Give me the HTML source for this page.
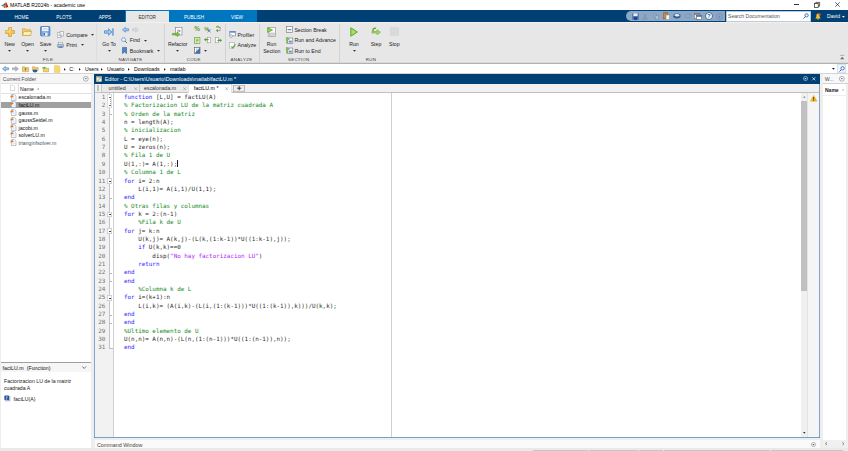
<!DOCTYPE html>
<html lang="es"><head><meta charset="utf-8"><title>MATLAB R2024b - academic use</title>
<style>
html,body{margin:0;padding:0;}
body{width:848px;height:451px;overflow:hidden;background:#f0f0f0;position:relative;font-family:"Liberation Sans",sans-serif;}
.a{position:absolute;}
.t{font-size:5.2px;line-height:8px;white-space:pre;color:#222;}
.ln{font-family:"DejaVu Sans Mono","Liberation Mono",monospace;font-size:5.9px;line-height:8px;text-align:right;color:#707070;white-space:pre;}
.cd{font-family:"DejaVu Sans Mono","Liberation Mono",monospace;font-size:5.9px;line-height:8px;white-space:pre;color:#2c2c2c;}
svg{overflow:visible;}
</style></head>
<body>
<div class="a " style="left:0px;top:0px;width:848px;height:10px;background:#fff;"></div>
<svg class="a" style="left:0.6px;top:1.6px" width="7.4" height="6.4" viewBox="0 0 7.4 6.4"><path d="M0 3.6L2.2 2.4L3.4 3.6L2.4 4.8Z" fill="#4a8fd0"/><path d="M2.4 4.8L3.4 3.6L5 0.2C5.6 1 6.4 3.4 7.4 5.2C6.6 4.8 6 5 5.4 6L4.4 5.2L3.4 6.2Z" fill="#d9541e"/><path d="M2.2 2.4L3.4 3.6L5 0.2C4.2 0.6 3.4 1.8 2.2 2.4Z" fill="#2a3f6a"/><path d="M5 0.2C5.6 1 6.4 3.4 7.4 5.2C6.8 4.8 6.2 4.9 5.8 5.5C5.6 3.6 5.4 1.8 5 0.2Z" fill="#8c1c0e"/><path d="M4.2 2.4L4.8 5L4.2 5.4L3.6 4Z" fill="#f5a020"/></svg>
<div class="a t" style="top:0.9px;left:9.9px;color:#000;font-size:5.1px;">MATLAB R2024b - academic use</div>
<div class="a " style="left:794.2px;top:4.2px;width:5px;height:0.5px;background:#333;"></div>
<svg class="a" style="left:813.5px;top:2px" width="6" height="6" viewBox="0 0 6 6"><rect x="0.4" y="1.6" width="3.8" height="3.8" fill="none" stroke="#222" stroke-width="0.7"/><path d="M1.8 1.6V0.4H5.6V4.2H4.2" fill="none" stroke="#222" stroke-width="0.7"/></svg>
<svg class="a" style="left:834.5px;top:2px" width="5" height="5" viewBox="0 0 5 5"><path d="M0.3 0.3L4.7 4.7M4.7 0.3L0.3 4.7" stroke="#222" stroke-width="0.7"/></svg>
<div class="a " style="left:0px;top:10px;width:848px;height:12px;background:#004074;"></div>
<div class="a " style="left:125px;top:10px;width:132.3px;height:12px;background:#0076c0;"></div>
<div class="a " style="left:125.6px;top:11px;width:43px;height:11.5px;background:#e7e7e7;"></div>
<div class="a t" style="top:13.6px;left:21.5px;transform:translateX(-50%);color:#fff;font-size:4.7px;">HOME</div>
<div class="a t" style="top:13.6px;left:64px;transform:translateX(-50%);color:#fff;font-size:4.7px;">PLOTS</div>
<div class="a t" style="top:13.6px;left:105px;transform:translateX(-50%);color:#fff;font-size:4.7px;">APPS</div>
<div class="a t" style="top:13.6px;left:194px;transform:translateX(-50%);color:#fff;font-size:4.7px;">PUBLISH</div>
<div class="a t" style="top:13.6px;left:237px;transform:translateX(-50%);color:#fff;font-size:4.7px;">VIEW</div>
<div class="a t" style="top:13.6px;left:147.2px;transform:translateX(-50%);color:#333;font-size:4.7px;">EDITOR</div>
<div class="a " style="left:626.3px;top:11.2px;width:99px;height:9.8px;background:#8da7c7;border-radius:5px 0 0 5px;"></div>
<svg class="a" style="left:631.5px;top:12.5px" width="7" height="7" viewBox="0 0 7 7"><rect x="0.3" y="0.3" width="6.4" height="6.4" rx="0.5" fill="#3d6fb0"/><rect x="1.4" y="0.3" width="4.2" height="2.8" fill="#e8eef6"/><rect x="2" y="4.3" width="3" height="2.4" fill="#1e3e6e"/></svg>
<svg class="a" style="left:642.4px;top:12.5px" width="6" height="7" viewBox="0 0 6 7"><path d="M1.2 0.5L4 5M4.8 0.5L2 5" stroke="#7389a6" stroke-width="0.6" fill="none"/><circle cx="1.6" cy="5.7" r="0.9" fill="none" stroke="#7389a6" stroke-width="0.5"/><circle cx="4.4" cy="5.7" r="0.9" fill="none" stroke="#7389a6" stroke-width="0.5"/></svg>
<svg class="a" style="left:653.0px;top:12.5px" width="6" height="7" viewBox="0 0 6 7"><rect x="0.5" y="0.8" width="3" height="3.8" fill="#9fb4cf" stroke="#6f87a8" stroke-width="0.5"/><rect x="2.5" y="2.6" width="3" height="3.8" fill="#a9bcd4" stroke="#6f87a8" stroke-width="0.5"/></svg>
<svg class="a" style="left:663.0px;top:12.0px" width="7" height="8" viewBox="0 0 7 8"><rect x="0.4" y="0.8" width="4.4" height="6" fill="#c98a3a" stroke="#8a5a1c" stroke-width="0.5"/><rect x="1.6" y="0.2" width="2" height="1.3" fill="#777"/><rect x="3" y="3" width="3.5" height="4.5" fill="#f4f4f4" stroke="#7a8ba3" stroke-width="0.5"/></svg>
<svg class="a" style="left:673.25px;top:13.0px" width="8" height="6" viewBox="0 0 8 6"><ellipse cx="4" cy="3" rx="3.6" ry="2.4" fill="#2e5d94"/><ellipse cx="4" cy="2.2" rx="2.6" ry="1.2" fill="#dfe9f5"/><path d="M0.4 3L2.2 3L1.3 4.6Z" fill="#173a66"/></svg>
<svg class="a" style="left:683.5px;top:13.0px" width="8" height="6" viewBox="0 0 8 6"><ellipse cx="4" cy="3" rx="3.2" ry="2.1" fill="none" stroke="#7d93b1" stroke-width="0.7"/><path d="M5 0.4L7.2 1.2L5.6 2.6Z" fill="#7d93b1"/></svg>
<svg class="a" style="left:694.0px;top:12.5px" width="8" height="7" viewBox="0 0 8 7"><rect x="0.4" y="0.6" width="5.4" height="4.6" fill="#f2f2f2" stroke="#666" stroke-width="0.5"/><rect x="0.4" y="0.6" width="5.4" height="1.1" fill="#666"/><rect x="2.4" y="2.6" width="5.2" height="4" fill="#fff" stroke="#444" stroke-width="0.5"/><rect x="2.4" y="2.6" width="5.2" height="1.1" fill="#2b5a94"/></svg>
<svg class="a" style="left:704.75px;top:12.0px" width="8" height="8" viewBox="0 0 8 8"><circle cx="4" cy="4" r="3.5" fill="#fff" stroke="#24507f" stroke-width="0.8"/><text x="4" y="6" font-family="Liberation Sans,sans-serif" font-size="5.4" font-weight="bold" text-anchor="middle" fill="#24507f">?</text></svg>
<svg class="a" style="left:715.9px;top:12.5px" width="7" height="7" viewBox="0 0 7 7"><circle cx="3.5" cy="3.5" r="3" fill="none" stroke="#6f86a5" stroke-width="0.6"/><path d="M2.2 4L3.5 2.4L4.8 4Z" fill="#6f86a5"/><rect x="3.2" y="3.6" width="0.6" height="1.6" fill="#6f86a5"/></svg>
<div class="a " style="left:726px;top:10.6px;width:84.6px;height:11.2px;background:#fff;box-shadow:inset 0 0 0 0.5px #7a9ac0;"></div>
<div class="a t" style="top:12.4px;left:728px;color:#555;font-size:5.1px;">Search Documentation</div>
<svg class="a" style="left:803.0px;top:13.0px" width="6" height="6" viewBox="0 0 6 6"><circle cx="3.6" cy="2.3" r="1.7" fill="#dfeaf8" stroke="#2f69b3" stroke-width="0.8"/><path d="M2.4 3.6L0.5 5.5" stroke="#2f69b3" stroke-width="1"/></svg>
<svg class="a" style="left:814.6px;top:12.5px" width="6" height="7" viewBox="0 0 6 7"><path d="M3 0.6C1.6 0.6 1.4 2 1.4 3.2C1.4 4.4 0.6 4.8 0.4 5.4H5.6C5.4 4.8 4.6 4.4 4.6 3.2C4.6 2 4.4 0.6 3 0.6Z" fill="#f2c230"/><circle cx="3" cy="6" r="0.7" fill="#f2c230"/><circle cx="4.7" cy="1.5" r="1.2" fill="#e0452b"/></svg>
<div class="a t" style="top:12.4px;left:827px;color:#fff;font-size:5.1px;">David</div>
<svg class="a" style="left:841.6px;top:15.75px" width="2.8" height="1.7" viewBox="0 0 2.8 1.7"><path d="M0 0H2.8L1.4 1.7Z" fill="#fff"/></svg>
<div class="a " style="left:0px;top:22.2px;width:848px;height:41px;background:#e7e7e7;"></div>
<div class="a " style="left:0px;top:22px;width:848px;height:1.4px;background:#f6f0ea;"></div>
<div class="a " style="left:0px;top:62.3px;width:848px;height:0.5px;background:#d8d8d8;"></div>
<div class="a " style="left:0px;top:62.7px;width:848px;height:0.9px;background:#b2b2b2;"></div>
<div class="a " style="left:95.60000000000001px;top:24px;width:0.7px;height:37.5px;background:#dedede;"></div>
<div class="a " style="left:164.1px;top:24px;width:0.7px;height:37.5px;background:#d2d2d2;"></div>
<div class="a " style="left:225.29999999999998px;top:24px;width:0.7px;height:37.5px;background:#d2d2d2;"></div>
<div class="a " style="left:259.09999999999997px;top:24px;width:0.7px;height:37.5px;background:#d2d2d2;"></div>
<div class="a " style="left:339.3px;top:24px;width:0.7px;height:37.5px;background:#d2d2d2;"></div>
<div class="a t" style="top:55.7px;left:48px;transform:translateX(-50%);color:#404040;font-size:4.4px;letter-spacing:0.3px;">FILE</div>
<div class="a t" style="top:55.7px;left:130.5px;transform:translateX(-50%);color:#404040;font-size:4.4px;letter-spacing:0.3px;">NAVIGATE</div>
<div class="a t" style="top:55.7px;left:193.75px;transform:translateX(-50%);color:#404040;font-size:4.4px;letter-spacing:0.3px;">CODE</div>
<div class="a t" style="top:55.7px;left:241.5px;transform:translateX(-50%);color:#404040;font-size:4.4px;letter-spacing:0.3px;">ANALYZE</div>
<div class="a t" style="top:55.7px;left:298.75px;transform:translateX(-50%);color:#404040;font-size:4.4px;letter-spacing:0.3px;">SECTION</div>
<div class="a t" style="top:55.7px;left:371px;transform:translateX(-50%);color:#404040;font-size:4.4px;letter-spacing:0.3px;">RUN</div>
<svg class="a" style="left:4.6px;top:26.9px" width="10" height="10" viewBox="0 0 10 10"><path d="M3.6 0.6H6.4V3.6H9.4V6.4H6.4V9.4H3.6V6.4H0.6V3.6H3.6Z" fill="#f7cf52" stroke="#c8922a" stroke-width="0.7"/><path d="M4.2 1.2H5.2V4.2H1.2V5.2" fill="none" stroke="#fdebb0" stroke-width="0.6"/></svg>
<div class="a t" style="top:39.8px;left:9.6px;transform:translateX(-50%);color:#1c1c1c;">New</div>
<svg class="a" style="left:8.1px;top:49.5px" width="3" height="1.8" viewBox="0 0 3 1.8"><path d="M0 0H3L1.5 1.8Z" fill="#333"/></svg>
<svg class="a" style="left:22.4px;top:27.8px" width="10" height="8" viewBox="0 0 10 8"><path d="M0.5 0.8H3.4L4.2 1.8H8.6V7.5H0.5Z" fill="#f3cf73" stroke="#c49a35" stroke-width="0.6"/><path d="M0.5 7.5L1.8 3.4H9.6L8.6 7.5Z" fill="#fcecb6" stroke="#c49a35" stroke-width="0.6"/></svg>
<div class="a t" style="top:39.8px;left:27.5px;transform:translateX(-50%);color:#1c1c1c;">Open</div>
<svg class="a" style="left:26.0px;top:49.5px" width="3" height="1.8" viewBox="0 0 3 1.8"><path d="M0 0H3L1.5 1.8Z" fill="#333"/></svg>
<svg class="a" style="left:40.4px;top:26.2px" width="10.4" height="10.4" viewBox="0 0 10.4 10.4"><rect x="0.5" y="0.5" width="9.4" height="9.4" rx="0.8" fill="#6f9fd8" stroke="#3f6fae" stroke-width="0.7"/><rect x="2" y="1" width="6.4" height="4.2" fill="#f4f8fd"/><rect x="2.8" y="2.2" width="4.8" height="0.5" fill="#a9c2e0"/><rect x="2.8" y="3.4" width="4.8" height="0.5" fill="#a9c2e0"/><rect x="2.8" y="6.6" width="4.8" height="3.3" fill="#e9f0f9"/><rect x="3.4" y="7" width="1.6" height="2.6" fill="#3f6fae"/></svg>
<div class="a t" style="top:39.8px;left:45.6px;transform:translateX(-50%);color:#1c1c1c;">Save</div>
<svg class="a" style="left:44.1px;top:49.5px" width="3" height="1.8" viewBox="0 0 3 1.8"><path d="M0 0H3L1.5 1.8Z" fill="#333"/></svg>
<svg class="a" style="left:57.1px;top:31.3px" width="7" height="7" viewBox="0 0 7 7"><rect x="0.4" y="1.8" width="3.6" height="4.6" fill="#fff" stroke="#8a8a8a" stroke-width="0.5"/><rect x="3" y="0.5" width="3.6" height="4.6" fill="#f4f4f4" stroke="#8a8a8a" stroke-width="0.5"/><path d="M1.2 4.2H5" stroke="#7b96b8" stroke-width="0.6"/></svg>
<div class="a t" style="top:30.9px;left:66.2px;color:#1c1c1c;font-size:5.25px;">Compare</div>
<svg class="a" style="left:91.3px;top:34.4px" width="3" height="1.8" viewBox="0 0 3 1.8"><path d="M0 0H3L1.5 1.8Z" fill="#333"/></svg>
<svg class="a" style="left:57.1px;top:41.6px" width="7" height="6.4" viewBox="0 0 7 6.4"><rect x="1.6" y="0.3" width="3.8" height="2.2" fill="#fff" stroke="#8a8a8a" stroke-width="0.5"/><rect x="0.4" y="2.3" width="6.2" height="2.8" rx="0.5" fill="#b9c3cf" stroke="#6f7c8c" stroke-width="0.5"/><rect x="1.4" y="4.4" width="4.2" height="1.6" fill="#5d8ac4"/></svg>
<div class="a t" style="top:40.9px;left:66.2px;color:#1c1c1c;font-size:5.25px;">Print</div>
<svg class="a" style="left:80.8px;top:44.4px" width="3" height="1.8" viewBox="0 0 3 1.8"><path d="M0 0H3L1.5 1.8Z" fill="#333"/></svg>
<svg class="a" style="left:103.5px;top:27.9px" width="10" height="8" viewBox="0 0 10 8"><path d="M0.5 2.8H4.6V0.8L8 4L4.6 7.2V5.2H0.5Z" fill="#9cc6ee" stroke="#3f7fc4" stroke-width="0.7"/><rect x="8.4" y="0.4" width="1.1" height="7.2" fill="#3f7fc4"/></svg>
<div class="a t" style="top:39.8px;left:109px;transform:translateX(-50%);color:#1c1c1c;">Go To</div>
<svg class="a" style="left:107.5px;top:49.5px" width="3" height="1.8" viewBox="0 0 3 1.8"><path d="M0 0H3L1.5 1.8Z" fill="#333"/></svg>
<svg class="a" style="left:121.5px;top:26.6px" width="7" height="5.6" viewBox="0 0 7 5.6"><path d="M6.6 1.8H3.4V0.4L0.4 2.8L3.4 5.2V3.8H6.6Z" fill="#a5ccf0" stroke="#3f7fc4" stroke-width="0.6"/></svg>
<svg class="a" style="left:132.1px;top:26.6px" width="7" height="5.6" viewBox="0 0 7 5.6"><path d="M0.4 1.8H3.6V0.4L6.6 2.8L3.6 5.2V3.8H0.4Z" fill="#dadada" stroke="#c2c2c2" stroke-width="0.5"/></svg>
<svg class="a" style="left:121.2px;top:36.8px" width="6.4" height="6.4" viewBox="0 0 6.4 6.4"><circle cx="2.6" cy="2.6" r="2" fill="#e6f0fb" stroke="#5a8fce" stroke-width="0.7"/><path d="M4.1 4.1L6 6" stroke="#8a6a3a" stroke-width="1"/></svg>
<div class="a t" style="top:36.1px;left:129.8px;color:#1c1c1c;font-size:5.25px;">Find</div>
<svg class="a" style="left:143.8px;top:39.5px" width="3" height="1.8" viewBox="0 0 3 1.8"><path d="M0 0H3L1.5 1.8Z" fill="#333"/></svg>
<svg class="a" style="left:121.9px;top:46.9px" width="5" height="7" viewBox="0 0 5 7"><path d="M0.5 0.4H4.5V6.6L2.5 4.9L0.5 6.6Z" fill="#4f86c6" stroke="#2a5d9c" stroke-width="0.6"/></svg>
<div class="a t" style="top:46.5px;left:129.8px;color:#1c1c1c;font-size:5.25px;">Bookmark</div>
<svg class="a" style="left:157.3px;top:49.9px" width="3" height="1.8" viewBox="0 0 3 1.8"><path d="M0 0H3L1.5 1.8Z" fill="#333"/></svg>
<svg class="a" style="left:172.0px;top:26.6px" width="11" height="10" viewBox="0 0 11 10"><rect x="3.6" y="0.4" width="6.4" height="7.6" fill="#fff" stroke="#7d7d7d" stroke-width="0.6"/><text x="6.8" y="5" font-family="Liberation Serif,serif" font-style="italic" font-size="4.4" text-anchor="middle" fill="#222">fx</text><path d="M0.4 6.4H5V5L8 7.2L5 9.4V8H0.4Z" fill="#7cc242" stroke="#4d8f1f" stroke-width="0.5"/></svg>
<div class="a t" style="top:39.8px;left:177.7px;transform:translateX(-50%);color:#1c1c1c;">Refactor</div>
<svg class="a" style="left:176.2px;top:49.5px" width="3" height="1.8" viewBox="0 0 3 1.8"><path d="M0 0H3L1.5 1.8Z" fill="#333"/></svg>
<svg class="a" style="left:193.7px;top:26.2px" width="6.4" height="6.4" viewBox="0 0 6.4 6.4"><text x="3.2" y="5.4" font-family="Liberation Sans,sans-serif" font-size="6.4" font-weight="bold" text-anchor="middle" fill="#5aa02c">%</text></svg>
<svg class="a" style="left:204.0px;top:26.2px" width="7" height="6.4" viewBox="0 0 7 6.4"><text x="2.8" y="5" font-family="Liberation Sans,sans-serif" font-size="5.6" font-weight="bold" text-anchor="middle" fill="#5aa02c">%</text><path d="M3.6 3.4L6.6 6.2M6.6 3.4L3.6 6.2" stroke="#3c6fb0" stroke-width="0.8"/></svg>
<svg class="a" style="left:214.5px;top:26.2px" width="7" height="6.4" viewBox="0 0 7 6.4"><path d="M1 1.2H5.2V4.6H2.4" fill="none" stroke="#8a8a8a" stroke-width="0.7"/><path d="M3 3L0.8 4.6L3 6.2Z" fill="#5aa02c"/><path d="M1.2 0.6C3 -0.2 4.4 0.4 4.6 2" fill="none" stroke="#5aa02c" stroke-width="0.9"/></svg>
<svg class="a" style="left:193.7px;top:36.5px" width="6.4" height="7" viewBox="0 0 6.4 7"><rect x="0.5" y="0.5" width="5.4" height="6" fill="#e3f3cf" stroke="#6aa83a" stroke-width="0.7"/><path d="M1.8 2.2H4.6M1.8 3.6H4.6M1.8 5H3.6" stroke="#4d8f1f" stroke-width="0.6"/></svg>
<svg class="a" style="left:204.0px;top:36.8px" width="7" height="6.4" viewBox="0 0 7 6.4"><rect x="3.6" y="0.6" width="3" height="5.2" fill="#fff" stroke="#8a8a8a" stroke-width="0.5"/><path d="M4.6 2.6H0.4" stroke="#5aa02c" stroke-width="1.2"/><path d="M2.2 0.8L0.2 2.6L2.2 4.4Z" fill="#5aa02c"/></svg>
<svg class="a" style="left:214.5px;top:36.8px" width="7" height="6.4" viewBox="0 0 7 6.4"><rect x="0.4" y="0.6" width="3" height="5.2" fill="#fff" stroke="#8a8a8a" stroke-width="0.5"/><path d="M2.4 3.4H6.4" stroke="#5aa02c" stroke-width="1.2"/><path d="M4.8 1.6L6.8 3.4L4.8 5.2Z" fill="#5aa02c"/></svg>
<svg class="a" style="left:193.7px;top:46.9px" width="6.4" height="7" viewBox="0 0 6.4 7"><rect x="0.4" y="0.4" width="5.6" height="6.2" fill="#fff" stroke="#555" stroke-width="0.6"/><path d="M0.4 6.6L6 0.4V6.6Z" fill="#3f75b5"/><text x="2.4" y="4" font-family="Liberation Serif,serif" font-style="italic" font-size="3.6" text-anchor="middle" fill="#222">f</text></svg>
<svg class="a" style="left:203.8px;top:49.7px" width="3" height="1.8" viewBox="0 0 3 1.8"><path d="M0 0H3L1.5 1.8Z" fill="#333"/></svg>
<svg class="a" style="left:229.25px;top:30.9px" width="7" height="7" viewBox="0 0 7 7"><rect x="0.8" y="0.5" width="5.6" height="4.4" fill="#fff" stroke="#4a78b4" stroke-width="0.6"/><rect x="0.8" y="0.5" width="5.6" height="1.1" fill="#4a78b4"/><circle cx="2" cy="5" r="1.4" fill="#f2f2f2" stroke="#777" stroke-width="0.5"/></svg>
<div class="a t" style="top:30.5px;left:237.5px;color:#1c1c1c;font-size:5.25px;">Profiler</div>
<svg class="a" style="left:229.25px;top:41.5px" width="7" height="7" viewBox="0 0 7 7"><rect x="0.6" y="0.5" width="4.6" height="5.6" fill="#fff" stroke="#9a9a9a" stroke-width="0.5"/><path d="M2.4 4.4L3.6 5.8L6.4 2.4" fill="none" stroke="#5aa02c" stroke-width="1.1"/></svg>
<div class="a t" style="top:41.1px;left:237.5px;color:#1c1c1c;font-size:5.25px;">Analyze</div>
<svg class="a" style="left:266.5px;top:26.9px" width="9" height="10" viewBox="0 0 9 10"><rect x="1.2" y="0.6" width="7.2" height="8.8" fill="#fbfbfb" stroke="#8a8a8a" stroke-width="0.6"/><rect x="2.4" y="6" width="4.8" height="2.2" fill="#d7d7d7" stroke="#9a9a9a" stroke-width="0.4"/><path d="M0.6 0.6L5.6 3L0.6 5.4Z" fill="#8fd14f" stroke="#4d9a1f" stroke-width="0.6"/></svg>
<div class="a t" style="top:39.6px;left:271.6px;transform:translateX(-50%);color:#1c1c1c;">Run</div>
<div class="a t" style="top:46.7px;left:271.8px;transform:translateX(-50%);color:#1c1c1c;">Section</div>
<svg class="a" style="left:285.9px;top:25.9px" width="7" height="7" viewBox="0 0 7 7"><rect x="0.6" y="0.5" width="5.8" height="6" fill="#fff" stroke="#6f6f6f" stroke-width="0.6"/><path d="M1.6 3.6H5.4" stroke="#3f75b5" stroke-width="0.9"/><path d="M1.6 5H5.4" stroke="#bbb" stroke-width="0.5"/></svg>
<div class="a t" style="top:25.5px;left:294.4px;color:#1c1c1c;font-size:5.2px;">Section Break</div>
<svg class="a" style="left:285.7px;top:36.5px" width="7.4" height="7" viewBox="0 0 7.4 7"><rect x="1.6" y="1" width="5.2" height="5.6" fill="#fff" stroke="#6f6f6f" stroke-width="0.6"/><rect x="2.6" y="3.6" width="3.2" height="2" fill="#5b8fd0"/><path d="M0.3 0.4L3.6 2L0.3 3.6Z" fill="#8fd14f" stroke="#4d9a1f" stroke-width="0.5"/><path d="M0.6 4.2V6.4" stroke="#4d9a1f" stroke-width="0.7"/></svg>
<div class="a t" style="top:36.1px;left:294.4px;color:#1c1c1c;font-size:5.25px;">Run and Advance</div>
<svg class="a" style="left:285.7px;top:46.9px" width="7.4" height="7" viewBox="0 0 7.4 7"><rect x="1.6" y="1" width="5.2" height="5.6" fill="#fff" stroke="#6f6f6f" stroke-width="0.6"/><rect x="2.6" y="3.6" width="3.2" height="2" fill="#5b8fd0"/><path d="M0.3 0.4L3.6 2L0.3 3.6Z" fill="#8fd14f" stroke="#4d9a1f" stroke-width="0.5"/><path d="M0.6 4.2V6.4" stroke="#4d9a1f" stroke-width="0.7"/></svg>
<div class="a t" style="top:46.5px;left:294.4px;color:#1c1c1c;font-size:5.25px;">Run to End</div>
<svg class="a" style="left:349.75px;top:26.9px" width="8" height="10" viewBox="0 0 8 10"><path d="M0.8 0.8L7.4 5L0.8 9.2Z" fill="#a6dc6c" stroke="#5aa828" stroke-width="1"/></svg>
<div class="a t" style="top:39.8px;left:354px;transform:translateX(-50%);color:#1c1c1c;">Run</div>
<svg class="a" style="left:352.5px;top:49.5px" width="3" height="1.8" viewBox="0 0 3 1.8"><path d="M0 0H3L1.5 1.8Z" fill="#333"/></svg>
<svg class="a" style="left:371.0px;top:27.4px" width="10" height="8" viewBox="0 0 10 8"><path d="M2 4.2C1.4 2 3 0.8 5 1.4" fill="none" stroke="#5aa828" stroke-width="1.4"/><path d="M1 4.4H6V2.8L9.4 5.2L6 7.6V6H1Z" fill="#a6dc6c" stroke="#5aa828" stroke-width="0.6"/></svg>
<div class="a t" style="top:39.8px;left:376px;transform:translateX(-50%);color:#1c1c1c;">Step</div>
<svg class="a" style="left:390.1px;top:27.1px" width="9" height="9" viewBox="0 0 9 9"><rect x="0.4" y="0.4" width="8.2" height="8.2" rx="0.6" fill="#d9d9d9" stroke="#cfcfcf" stroke-width="0.4"/></svg>
<div class="a t" style="top:39.8px;left:394.3px;transform:translateX(-50%);color:#1c1c1c;">Stop</div>
<svg class="a" style="left:840.3px;top:55.1px" width="4.4" height="4.6" viewBox="0 0 4.4 4.6"><path d="M0.2 0.4H4.2" stroke="#8a8a8a" stroke-width="0.6"/><path d="M0.2 4.3L2.2 1.8L4.2 4.3Z" fill="#6a6a6a"/></svg>
<div class="a " style="left:0px;top:63.6px;width:848px;height:9.6px;background:#fff;"></div>
<svg class="a" style="left:1.5px;top:66.2px" width="7" height="5.6" viewBox="0 0 7 5.6"><path d="M6.6 1.8H3.4V0.4L0.4 2.8L3.4 5.2V3.8H6.6Z" fill="#a5ccf0" stroke="#3f7fc4" stroke-width="0.6"/></svg>
<svg class="a" style="left:11.5px;top:66.2px" width="7" height="5.6" viewBox="0 0 7 5.6"><path d="M0.4 1.8H3.6V0.4L6.6 2.8L3.6 5.2V3.8H0.4Z" fill="#b5b5b5" stroke="#9a9a9a" stroke-width="0.5"/></svg>
<svg class="a" style="left:22.1px;top:66.0px" width="7" height="6" viewBox="0 0 7 6"><path d="M0.4 0.8H2.8L3.4 1.6H6.6V5.6H0.4Z" fill="#f3cf73" stroke="#b98f2f" stroke-width="0.5"/><path d="M3.5 2.4V4.8M2.4 3.4L3.5 2.2L4.6 3.4" stroke="#7a5a12" stroke-width="0.6" fill="none"/></svg>
<svg class="a" style="left:31.5px;top:65.8px" width="7" height="6.4" viewBox="0 0 7 6.4"><path d="M0.4 0.8H2.8L3.4 1.6H6.2V4.4H0.4Z" fill="#f3cf73" stroke="#b98f2f" stroke-width="0.5"/><ellipse cx="3" cy="5" rx="2.4" ry="1.4" fill="#2a5fa8"/></svg>
<svg class="a" style="left:41.75px;top:65.8px" width="7" height="6.4" viewBox="0 0 7 6.4"><path d="M1.4 1.4H3.6L4.2 2.2H6.6V5.8H1.4Z" fill="#f3cf73" stroke="#b98f2f" stroke-width="0.5"/><path d="M0.2 1.2H2.2V0.2L3.8 1.8L2.2 3.4V2.4H0.2Z" fill="#6ab83a"/></svg>
<svg class="a" style="left:53.8px;top:65.0px" width="6.4" height="8" viewBox="0 0 6.4 8"><path d="M0.4 0.4H4L6 1.6V7.6H0.4Z" fill="#f7d774" stroke="#e2bb4b" stroke-width="0.4"/></svg>
<svg class="a" style="left:63.95px;top:67.7px" width="1.7" height="2.8" viewBox="0 0 1.7 2.8"><path d="M0 0V2.8L1.7 1.4Z" fill="#222"/></svg>
<svg class="a" style="left:78.55px;top:67.7px" width="1.7" height="2.8" viewBox="0 0 1.7 2.8"><path d="M0 0V2.8L1.7 1.4Z" fill="#222"/></svg>
<svg class="a" style="left:100.55px;top:67.7px" width="1.7" height="2.8" viewBox="0 0 1.7 2.8"><path d="M0 0V2.8L1.7 1.4Z" fill="#222"/></svg>
<svg class="a" style="left:128.15px;top:67.7px" width="1.7" height="2.8" viewBox="0 0 1.7 2.8"><path d="M0 0V2.8L1.7 1.4Z" fill="#222"/></svg>
<svg class="a" style="left:163.65px;top:67.7px" width="1.7" height="2.8" viewBox="0 0 1.7 2.8"><path d="M0 0V2.8L1.7 1.4Z" fill="#222"/></svg>
<div class="a t" style="top:65.1px;left:69.3px;color:#000;">C:</div>
<div class="a t" style="top:65.1px;left:85px;color:#000;">Users</div>
<div class="a t" style="top:65.1px;left:107px;color:#000;letter-spacing:-0.1px;">Usuario</div>
<div class="a t" style="top:65.1px;left:134px;color:#000;">Downloads</div>
<div class="a t" style="top:65.1px;left:170px;color:#000;">matlab</div>
<svg class="a" style="left:832.4px;top:67.95px" width="2.8" height="1.7" viewBox="0 0 2.8 1.7"><path d="M0 0H2.8L1.4 1.7Z" fill="#111"/></svg>
<div class="a " style="left:837px;top:64.3px;width:9.3px;height:8.4px;background:#f0f5fb;box-shadow:inset 0 0 0 0.5px #c3cfdf;"></div>
<svg class="a" style="left:839.2px;top:65.6px" width="6" height="6" viewBox="0 0 6 6"><circle cx="3.6" cy="2.3" r="1.7" fill="#eef5fd" stroke="#2f69b3" stroke-width="0.8"/><path d="M2.4 3.6L0.5 5.5" stroke="#2f69b3" stroke-width="1"/></svg>
<div class="a " style="left:0px;top:73.2px;width:848px;height:377.8px;background:#eeeeee;"></div>
<div class="a " style="left:0px;top:73.1px;width:848px;height:0.5px;background:#d4d4d4;"></div>
<div class="a " style="left:0.6px;top:74.4px;width:90.8px;height:373.2px;background:#fff;"></div>
<div class="a " style="left:0.6px;top:74.4px;width:90.8px;height:8.2px;background:#f6f6f6;"></div>
<div class="a t" style="top:74.9px;left:2.8px;color:#4f4850;">Current Folder</div>
<svg class="a" style="left:83.2px;top:75.9px" width="5.6" height="5.6" viewBox="0 0 5.6 5.6"><circle cx="2.8" cy="2.8" r="2.4" fill="#fff" stroke="#666" stroke-width="0.5"/><path d="M1.7 2.3L2.8 3.6L3.9 2.3Z" fill="#444"/></svg>
<div class="a " style="left:0.6px;top:82.6px;width:90.8px;height:0.5px;background:#e2e2e2;"></div>
<svg class="a" style="left:10.0px;top:85.4px" width="5" height="6" viewBox="0 0 5 6"><path d="M0.4 0.4H3.2L4.6 1.8V5.6H0.4Z" fill="#fff" stroke="#b5b5b5" stroke-width="0.5"/></svg>
<div class="a " style="left:18.4px;top:83.6px;width:0.5px;height:9.4px;background:#dcdcdc;"></div>
<div class="a t" style="top:84.5px;left:20px;color:#222;">Name</div>
<svg class="a" style="left:36.8px;top:87.55px" width="2.4" height="1.5" viewBox="0 0 2.4 1.5"><path d="M0 1.5L1.2 0L2.4 1.5Z" fill="#8a8a8a"/></svg>
<div class="a " style="left:0.6px;top:93.2px;width:90.8px;height:0.5px;background:#e0e0e0;"></div>
<div class="a " style="left:0.9px;top:101.5px;width:90.3px;height:6.2px;background:#a0a0a0;"></div>
<svg class="a" style="left:9.6px;top:93.5px" width="6.4" height="7" viewBox="0 0 6.4 7"><path d="M1.4 0.6H4.6L6 2V6.6H1.4Z" fill="#fff" stroke="#7f95b5" stroke-width="0.55"/><path d="M2.4 5H5M2.4 4H5" stroke="#b8c6da" stroke-width="0.4"/><path d="M0.2 3.4L1 1.2L2 2.2L2.8 0.4L3.8 3.2L2.8 2.8L2 3.8L1.2 3Z" fill="#e8741c"/></svg>
<div class="a t" style="top:93.3px;left:18.5px;color:#111;">escalonada.m</div>
<svg class="a" style="left:9.6px;top:101.1px" width="6.4" height="7" viewBox="0 0 6.4 7"><path d="M1.4 0.6H4.6L6 2V6.6H1.4Z" fill="#fff" stroke="#7f95b5" stroke-width="0.55"/><path d="M2.4 5H5M2.4 4H5" stroke="#b8c6da" stroke-width="0.4"/><path d="M0.2 3.4L1 1.2L2 2.2L2.8 0.4L3.8 3.2L2.8 2.8L2 3.8L1.2 3Z" fill="#e8741c"/></svg>
<div class="a t" style="top:100.9px;left:18.5px;color:#111;">factLU.m</div>
<svg class="a" style="left:9.6px;top:109.2px" width="6.4" height="7" viewBox="0 0 6.4 7"><path d="M1.4 0.6H4.6L6 2V6.6H1.4Z" fill="#fff" stroke="#7f95b5" stroke-width="0.55"/><path d="M2.4 5H5M2.4 4H5" stroke="#b8c6da" stroke-width="0.4"/><path d="M0.2 3.4L1 1.2L2 2.2L2.8 0.4L3.8 3.2L2.8 2.8L2 3.8L1.2 3Z" fill="#e8741c"/></svg>
<div class="a t" style="top:109.0px;left:18.5px;color:#111;">gauss.m</div>
<svg class="a" style="left:9.6px;top:116.5px" width="6.4" height="7" viewBox="0 0 6.4 7"><path d="M1.4 0.6H4.6L6 2V6.6H1.4Z" fill="#fff" stroke="#7f95b5" stroke-width="0.55"/><path d="M2.4 5H5M2.4 4H5" stroke="#b8c6da" stroke-width="0.4"/><path d="M0.2 3.4L1 1.2L2 2.2L2.8 0.4L3.8 3.2L2.8 2.8L2 3.8L1.2 3Z" fill="#e8741c"/></svg>
<div class="a t" style="top:116.3px;left:18.5px;color:#111;">gaussSeidel.m</div>
<svg class="a" style="left:9.6px;top:124.0px" width="6.4" height="7" viewBox="0 0 6.4 7"><path d="M1.4 0.6H4.6L6 2V6.6H1.4Z" fill="#fff" stroke="#7f95b5" stroke-width="0.55"/><path d="M2.4 5H5M2.4 4H5" stroke="#b8c6da" stroke-width="0.4"/><path d="M0.2 3.4L1 1.2L2 2.2L2.8 0.4L3.8 3.2L2.8 2.8L2 3.8L1.2 3Z" fill="#e8741c"/></svg>
<div class="a t" style="top:123.8px;left:18.5px;color:#111;">jacobi.m</div>
<svg class="a" style="left:9.6px;top:131.3px" width="6.4" height="7" viewBox="0 0 6.4 7"><path d="M1.4 0.6H4.6L6 2V6.6H1.4Z" fill="#fff" stroke="#7f95b5" stroke-width="0.55"/><path d="M2.4 5H5M2.4 4H5" stroke="#b8c6da" stroke-width="0.4"/><path d="M0.2 3.4L1 1.2L2 2.2L2.8 0.4L3.8 3.2L2.8 2.8L2 3.8L1.2 3Z" fill="#e8741c"/></svg>
<div class="a t" style="top:131.1px;left:18.5px;color:#111;">solverLU.m</div>
<svg class="a" style="left:9.6px;top:139.1px" width="6.4" height="7" viewBox="0 0 6.4 7"><path d="M1.4 0.6H4.6L6 2V6.6H1.4Z" fill="#fff" stroke="#7f95b5" stroke-width="0.55"/><path d="M2.4 5H5M2.4 4H5" stroke="#b8c6da" stroke-width="0.4"/><path d="M0.2 3.4L1 1.2L2 2.2L2.8 0.4L3.8 3.2L2.8 2.8L2 3.8L1.2 3Z" fill="#e8741c"/></svg>
<div class="a t" style="top:138.9px;left:18.5px;color:#46586c;">trianginfsolver.m</div>
<div class="a " style="left:0.6px;top:362.2px;width:90.8px;height:0.8px;background:#9f9f9f;"></div>
<div class="a " style="left:0.6px;top:363px;width:90.8px;height:9.2px;background:#f6f6f6;"></div>
<div class="a t" style="top:363.9px;left:2.5px;color:#111;font-size:5.3px;">factLU.m  (Function)</div>
<svg class="a" style="left:82.4px;top:366.3px" width="4.4" height="3" viewBox="0 0 4.4 3"><path d="M0.4 0.5L2.2 2.5L4 0.5" fill="none" stroke="#3a3a3a" stroke-width="0.7"/></svg>
<div class="a t" style="top:376.7px;left:4px;color:#222;">Factorizacion LU de la matriz</div>
<div class="a t" style="top:384.1px;left:4px;color:#222;">cuadrada A</div>
<svg class="a" style="left:3.8px;top:395.4px" width="6.4" height="6.4" viewBox="0 0 6.4 6.4"><rect x="1.6" y="1.6" width="4.4" height="4.4" fill="#b9cbe6" stroke="#6f8fc0" stroke-width="0.4"/><rect x="0.4" y="0.4" width="4.6" height="4.6" rx="0.6" fill="#254f96"/><text x="2.7" y="4" font-family="Liberation Serif,serif" font-style="italic" font-weight="bold" font-size="3.6" text-anchor="middle" fill="#fff">f</text></svg>
<div class="a t" style="top:394.9px;left:13.5px;color:#222;">factLU(A)</div>
<div class="a " style="left:94.1px;top:74.4px;width:725.6999999999999px;height:363.5px;background:#fff;box-shadow:inset 0 0 0 0.7px #4f7fb5;"></div>
<div class="a " style="left:94.1px;top:74.4px;width:725.6999999999999px;height:9.2px;background:#004074;"></div>
<svg class="a" style="left:95.6px;top:76.0px" width="6" height="6" viewBox="0 0 6 6"><rect x="0.4" y="0.4" width="5.2" height="5.2" fill="#f4f1e8" stroke="#c9c2ac" stroke-width="0.4"/><path d="M1 5L4.6 1.2L5.2 1.8L1.6 5.4Z" fill="#e09a2a"/><path d="M0.6 0.6H5.4V1.4H0.6Z" fill="#3f75b5"/></svg>
<div class="a t" style="top:74.9px;left:104.8px;color:#fff;font-size:5.35px;">Editor - C:\Users\Usuario\Downloads\matlab\factLU.m *</div>
<svg class="a" style="left:802.7px;top:76.4px" width="5" height="5" viewBox="0 0 5 5"><circle cx="2.5" cy="2.5" r="2.1" fill="none" stroke="#dfe8f4" stroke-width="0.55"/><path d="M1.4 2L2.5 3.4L3.6 2Z" fill="#dfe8f4"/></svg>
<svg class="a" style="left:812.1px;top:77.1px" width="3.6" height="3.6" viewBox="0 0 3.6 3.6"><path d="M0.3 0.3L3.3 3.3M3.3 0.3L0.3 3.3" stroke="#fff" stroke-width="0.7"/></svg>
<div class="a " style="left:94.8px;top:83.6px;width:724.3px;height:8.4px;background:#f0f0f0;"></div>
<div class="a " style="left:94.8px;top:92px;width:724.3px;height:0.7px;background:#c0c0c0;"></div>
<div class="a " style="left:96.6px;top:85px;width:0.5px;height:5.8px;background:#c2c2c2;"></div>
<div class="a " style="left:98.2px;top:85px;width:0.5px;height:5.8px;background:#c2c2c2;"></div>
<div class="a " style="left:101.4px;top:84px;width:0.5px;height:8px;background:#c8c8c8;"></div>
<div class="a " style="left:102px;top:84px;width:37px;height:8px;background:#e9e9e9;"></div>
<div class="a " style="left:139px;top:84px;width:0.5px;height:8px;background:#c8c8c8;"></div>
<div class="a " style="left:139.5px;top:84px;width:48.5px;height:8px;background:#e9e9e9;"></div>
<div class="a t" style="top:84.3px;left:108.5px;color:#333;font-size:5.3px;">untitled</div>
<div class="a t" style="top:84.3px;left:144px;color:#333;font-size:5.15px;">escalonada.m</div>
<svg class="a" style="left:133.7px;top:86.6px" width="3.4" height="3.4" viewBox="0 0 3.4 3.4"><path d="M0.3 0.3L3.1 3.1M3.1 0.3L0.3 3.1" stroke="#888" stroke-width="0.5"/></svg>
<svg class="a" style="left:183.1px;top:86.6px" width="3.4" height="3.4" viewBox="0 0 3.4 3.4"><path d="M0.3 0.3L3.1 3.1M3.1 0.3L0.3 3.1" stroke="#888" stroke-width="0.5"/></svg>
<div class="a " style="left:187.8px;top:84.3px;width:44.4px;height:8.5px;background:#fff;box-shadow:inset 0.5px 0.5px 0 0 #c4c4c4, inset -0.5px 0 0 0 #c4c4c4;"></div>
<div class="a t" style="top:84.3px;left:193.8px;color:#000;font-size:5.3px;">factLU.m *</div>
<svg class="a" style="left:225.2px;top:86.6px" width="3.4" height="3.4" viewBox="0 0 3.4 3.4"><path d="M0.3 0.3L3.1 3.1M3.1 0.3L0.3 3.1" stroke="#888" stroke-width="0.5"/></svg>
<div class="a " style="left:233.2px;top:84.6px;width:11.8px;height:7.4px;background:#ececec;box-shadow:inset 0 0 0 0.6px #9a9a9a;border-radius:1px;"></div>
<svg class="a" style="left:236.9px;top:86.2px" width="4.4" height="4.4" viewBox="0 0 4.4 4.4"><path d="M2.2 0.2V4.2M0.2 2.2H4.2" stroke="#222" stroke-width="0.9"/></svg>
<div class="a " style="left:94.8px;top:92.7px;width:18.3px;height:344.5px;background:#f2f2f2;"></div>
<div class="a " style="left:109.4px;top:92.7px;width:0.5px;height:255.3px;background:#c4c4c4;"></div>
<div class="a " style="left:112.9px;top:92.7px;width:0.5px;height:344.5px;background:#d0d0d0;"></div>
<div class="a " style="left:109.9px;top:92.7px;width:3px;height:255.3px;background:#fff;"></div>
<div class="a " style="left:390.6px;top:92.7px;width:0.9px;height:344.5px;background:#cfcfcf;"></div>
<div class="a " style="left:800.8px;top:92.7px;width:6.2px;height:344.5px;background:#f0f0f0;"></div>
<div class="a " style="left:801px;top:101px;width:5.8px;height:189.6px;background:#c1c1c1;"></div>
<svg class="a" style="left:802.6px;top:96.1px" width="2.6" height="1.8" viewBox="0 0 2.6 1.8"><path d="M0 1.8L1.3 0L2.6 1.8Z" fill="#8a8a8a"/></svg>
<svg class="a" style="left:802.6px;top:431.95px" width="2.6" height="1.7" viewBox="0 0 2.6 1.7"><path d="M0 0H2.6L1.3 1.7Z" fill="#333"/></svg>
<div class="a " style="left:807px;top:92.7px;width:12px;height:344.5px;background:#f5f5f5;"></div>
<div class="a " style="left:807px;top:92.7px;width:0.5px;height:344.5px;background:#e4e4e4;"></div>
<svg class="a" style="left:809.5px;top:95.3px" width="7.4" height="6.6" viewBox="0 0 7.4 6.6"><path d="M3.7 0.4L7 6.2H0.4Z" fill="#f5b81c" stroke="#d99a08" stroke-width="0.4"/><rect x="3.3" y="2.2" width="0.8" height="2.4" fill="#222"/><rect x="3.3" y="5" width="0.8" height="0.7" fill="#222"/></svg>
<div class="a ln" style="left:95px;width:10.4px;top:93.1px">1</div>
<div class="a cd" style="left:124px;top:93.1px"><span style="color:#2a1eff">function</span> [L,U] = factLU(A)</div>
<div class="a ln" style="left:95px;width:10.4px;top:101.44px">2</div>
<div class="a cd" style="left:124px;top:101.44px"><span style="color:#148a26">% Factorizacion LU de la matriz cuadrada A</span></div>
<div class="a ln" style="left:95px;width:10.4px;top:109.78px">3</div>
<div class="a cd" style="left:124px;top:109.78px"><span style="color:#148a26">% Orden de la matriz</span></div>
<div class="a ln" style="left:95px;width:10.4px;top:118.12px">4</div>
<div class="a cd" style="left:124px;top:118.12px">n = length(A);</div>
<div class="a ln" style="left:95px;width:10.4px;top:126.46px">5</div>
<div class="a cd" style="left:124px;top:126.46px"><span style="color:#148a26">% inicializacion</span></div>
<div class="a ln" style="left:95px;width:10.4px;top:134.8px">6</div>
<div class="a cd" style="left:124px;top:134.8px">L = eye(n);</div>
<div class="a ln" style="left:95px;width:10.4px;top:143.14px">7</div>
<div class="a cd" style="left:124px;top:143.14px">U = zeros(n);</div>
<div class="a ln" style="left:95px;width:10.4px;top:151.48px">8</div>
<div class="a cd" style="left:124px;top:151.48px"><span style="color:#148a26">% Fila 1 de U</span></div>
<div class="a ln" style="left:95px;width:10.4px;top:159.82px">9</div>
<div class="a cd" style="left:124px;top:159.82px">U(1,:)= A(1,:);</div>
<div class="a ln" style="left:95px;width:10.4px;top:168.16px">10</div>
<div class="a cd" style="left:124px;top:168.16px"><span style="color:#148a26">% Columna 1 de L</span></div>
<div class="a ln" style="left:95px;width:10.4px;top:176.5px">11</div>
<div class="a cd" style="left:124px;top:176.5px"><span style="color:#2a1eff">for</span> i= 2:n</div>
<div class="a ln" style="left:95px;width:10.4px;top:184.84px">12</div>
<div class="a cd" style="left:124px;top:184.84px">    L(i,1)= A(i,1)/U(1,1);</div>
<div class="a ln" style="left:95px;width:10.4px;top:193.18px">13</div>
<div class="a cd" style="left:124px;top:193.18px"><span style="color:#2a1eff">end</span></div>
<div class="a ln" style="left:95px;width:10.4px;top:201.52px">14</div>
<div class="a cd" style="left:124px;top:201.52px"><span style="color:#148a26">% Otras filas y columnas</span></div>
<div class="a ln" style="left:95px;width:10.4px;top:209.86px">15</div>
<div class="a cd" style="left:124px;top:209.86px"><span style="color:#2a1eff">for</span> k = 2:(n-1)</div>
<div class="a ln" style="left:95px;width:10.4px;top:218.2px">16</div>
<div class="a cd" style="left:124px;top:218.2px">    <span style="color:#148a26">%Fila k de U</span></div>
<div class="a ln" style="left:95px;width:10.4px;top:226.54px">17</div>
<div class="a cd" style="left:124px;top:226.54px"><span style="color:#2a1eff">for</span> j= k:n</div>
<div class="a ln" style="left:95px;width:10.4px;top:234.88px">18</div>
<div class="a cd" style="left:124px;top:234.88px">    U(k,j)= A(k,j)-(L(k,(1:k-1))*U((1:k-1),j));</div>
<div class="a ln" style="left:95px;width:10.4px;top:243.22px">19</div>
<div class="a cd" style="left:124px;top:243.22px">    <span style="color:#2a1eff">if</span> U(k,k)==0</div>
<div class="a ln" style="left:95px;width:10.4px;top:251.56px">20</div>
<div class="a cd" style="left:124px;top:251.56px">        disp(<span style="color:#ae26f5">&quot;No hay factorizacion LU&quot;</span>)</div>
<div class="a ln" style="left:95px;width:10.4px;top:259.9px">21</div>
<div class="a cd" style="left:124px;top:259.9px">    <span style="color:#2a1eff">return</span></div>
<div class="a ln" style="left:95px;width:10.4px;top:268.24px">22</div>
<div class="a cd" style="left:124px;top:268.24px"><span style="color:#2a1eff">end</span></div>
<div class="a ln" style="left:95px;width:10.4px;top:276.58px">23</div>
<div class="a cd" style="left:124px;top:276.58px"><span style="color:#2a1eff">end</span></div>
<div class="a ln" style="left:95px;width:10.4px;top:284.92px">24</div>
<div class="a cd" style="left:124px;top:284.92px">    <span style="color:#148a26">%Columna k de L</span></div>
<div class="a ln" style="left:95px;width:10.4px;top:293.26px">25</div>
<div class="a cd" style="left:124px;top:293.26px"><span style="color:#2a1eff">for</span> i=(k+1):n</div>
<div class="a ln" style="left:95px;width:10.4px;top:301.6px">26</div>
<div class="a cd" style="left:124px;top:301.6px">    L(i,k)= (A(i,k)-(L(i,(1:(k-1)))*U((1:(k-1)),k)))/U(k,k);</div>
<div class="a ln" style="left:95px;width:10.4px;top:309.94px">27</div>
<div class="a cd" style="left:124px;top:309.94px"><span style="color:#2a1eff">end</span></div>
<div class="a ln" style="left:95px;width:10.4px;top:318.28px">28</div>
<div class="a cd" style="left:124px;top:318.28px"><span style="color:#2a1eff">end</span></div>
<div class="a ln" style="left:95px;width:10.4px;top:326.62px">29</div>
<div class="a cd" style="left:124px;top:326.62px"><span style="color:#148a26">%Ultimo elemento de U</span></div>
<div class="a ln" style="left:95px;width:10.4px;top:334.96px">30</div>
<div class="a cd" style="left:124px;top:334.96px">U(n,n)= A(n,n)-(L(n,(1:(n-1)))*U((1:(n-1)),n));</div>
<div class="a ln" style="left:95px;width:10.4px;top:343.3px">31</div>
<div class="a cd" style="left:124px;top:343.3px"><span style="color:#2a1eff">end</span></div>
<div class="a " style="left:177.4px;top:160.42px;width:0.5px;height:6.6px;background:#222;"></div>
<div class="a " style="left:106.9px;top:94px;width:5.6px;height:14.4px;background:#fff;box-shadow:inset 0 0 0 0.5px #bcbcbc;border-radius:1.2px;"></div>
<div class="a " style="left:109.2px;top:96.9px;width:1.8px;height:0.5px;background:#666;"></div>
<div class="a " style="left:109.2px;top:105px;width:1.8px;height:0.5px;background:#666;"></div>
<div class="a " style="left:110px;top:99.4px;width:0.5px;height:0.6px;background:#999;"></div>
<div class="a " style="left:110px;top:101px;width:0.5px;height:0.6px;background:#999;"></div>
<div class="a " style="left:110px;top:102.6px;width:0.5px;height:0.6px;background:#999;"></div>
<div class="a " style="left:106.9px;top:178.2px;width:5.6px;height:5.6px;background:#fff;box-shadow:inset 0 0 0 0.5px #a8a8a8;border-radius:1.2px;"></div>
<div class="a " style="left:108.8px;top:180.8px;width:1.9px;height:0.6px;background:#444;"></div>
<div class="a " style="left:106.9px;top:211.55999999999997px;width:5.6px;height:5.6px;background:#fff;box-shadow:inset 0 0 0 0.5px #a8a8a8;border-radius:1.2px;"></div>
<div class="a " style="left:108.8px;top:214.16px;width:1.9px;height:0.6px;background:#444;"></div>
<div class="a " style="left:106.9px;top:228.23999999999998px;width:5.6px;height:5.6px;background:#fff;box-shadow:inset 0 0 0 0.5px #a8a8a8;border-radius:1.2px;"></div>
<div class="a " style="left:108.8px;top:230.84px;width:1.9px;height:0.6px;background:#444;"></div>
<div class="a " style="left:106.9px;top:294.96px;width:5.6px;height:5.6px;background:#fff;box-shadow:inset 0 0 0 0.5px #a8a8a8;border-radius:1.2px;"></div>
<div class="a " style="left:108.8px;top:297.56px;width:1.9px;height:0.6px;background:#444;"></div>
<div class="a " style="left:109.4px;top:347.8px;width:4px;height:0.5px;background:#bdbdbd;"></div>
<div class="a " style="left:109.9px;top:114.38px;width:2.4px;height:0.5px;background:#b4b4b4;"></div>
<div class="a " style="left:109.9px;top:197.78px;width:2.4px;height:0.5px;background:#b4b4b4;"></div>
<div class="a " style="left:109.9px;top:272.84000000000003px;width:2.4px;height:0.5px;background:#b4b4b4;"></div>
<div class="a " style="left:109.9px;top:281.18px;width:2.4px;height:0.5px;background:#b4b4b4;"></div>
<div class="a " style="left:109.9px;top:314.54px;width:2.4px;height:0.5px;background:#b4b4b4;"></div>
<div class="a " style="left:109.9px;top:322.88px;width:2.4px;height:0.5px;background:#b4b4b4;"></div>
<div class="a " style="left:94.6px;top:440.2px;width:725.2px;height:7.5px;background:#fafafa;"></div>
<div class="a t" style="top:440.5px;left:96.9px;color:#4a4440;font-size:5.4px;">Command Window</div>
<svg class="a" style="left:810.7px;top:441.5px" width="5" height="5" viewBox="0 0 5 5"><circle cx="2.5" cy="2.5" r="2.1" fill="#fff" stroke="#777" stroke-width="0.5"/><path d="M1.4 2L2.5 3.4L3.6 2Z" fill="#555"/></svg>
<div class="a " style="left:822.6px;top:74.4px;width:23.8px;height:373px;background:#fff;"></div>
<div class="a " style="left:822.6px;top:74.4px;width:25.4px;height:8.4px;background:#f8f8f8;"></div>
<div class="a t" style="top:74.9px;left:824.7px;color:#4f4850;">W...</div>
<svg class="a" style="left:839.2px;top:75.9px" width="5.6" height="5.6" viewBox="0 0 5.6 5.6"><circle cx="2.8" cy="2.8" r="2.4" fill="#fff" stroke="#666" stroke-width="0.5"/><path d="M1.7 2.3L2.8 3.6L3.9 2.3Z" fill="#444"/></svg>
<div class="a " style="left:822.6px;top:82.8px;width:25.4px;height:0.6px;background:#d2d2d2;"></div>
<div class="a t" style="top:86.0px;left:825px;color:#222;font-size:5px;font-weight:bold;">Name</div>
<svg class="a" style="left:842.1px;top:89.1px" width="2.2" height="1.4" viewBox="0 0 2.2 1.4"><path d="M0 1.4L1.1 0L2.2 1.4Z" fill="#b09a84"/></svg>
<div class="a " style="left:823px;top:95px;width:23px;height:0.5px;background:#efefef;"></div>
<div class="a " style="left:822.6px;top:439.6px;width:23.8px;height:7.8px;background:#f0f0f0;"></div>
<svg class="a" style="left:825.4px;top:441.9px" width="2.4" height="3.4" viewBox="0 0 2.4 3.4"><path d="M2 0.3L0.5 1.7L2 3.1" fill="none" stroke="#333" stroke-width="0.6"/></svg>
<svg class="a" style="left:842.0px;top:441.9px" width="2.4" height="3.4" viewBox="0 0 2.4 3.4"><path d="M0.4 0.3L1.9 1.7L0.4 3.1" fill="none" stroke="#333" stroke-width="0.6"/></svg>
<div class="a " style="left:0px;top:447.6px;width:848px;height:3.4px;background:#e9e9e9;"></div>
<div class="a " style="left:533px;top:449.5px;width:54.60000000000002px;height:1.5px;background:#c6c6c6;"></div>
<div class="a " style="left:589px;top:449.5px;width:49px;height:1.5px;background:#c6c6c6;"></div>
<div class="a " style="left:639.2px;top:449.5px;width:23.799999999999955px;height:1.5px;background:#c6c6c6;"></div>
<div class="a " style="left:664.2px;top:449.5px;width:105.39999999999998px;height:1.5px;background:#c6c6c6;"></div>
<div class="a " style="left:771.4px;top:449.5px;width:71.60000000000002px;height:1.5px;background:#c6c6c6;"></div>
</body></html>
